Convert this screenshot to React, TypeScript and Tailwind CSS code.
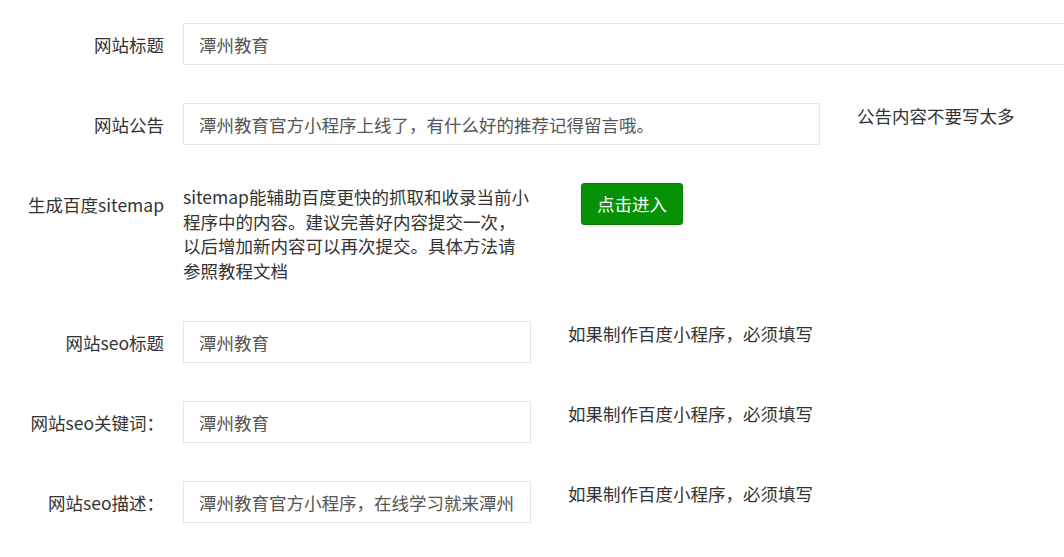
import React from "react";

const labelCls =
  "w-[183px] shrink-0 pr-[19px] text-right pt-[8.5px] leading-[25px] text-[#333] whitespace-nowrap";
const inputCls =
  "h-[42px] shrink-0 border border-[#e6e6e6] bg-white px-[15px] text-[17.5px] text-[#555] outline-none";
const tipCls = "ml-[37px] leading-[25px] text-[#333] whitespace-nowrap";

function Row({ children }: { children: React.ReactNode }) {
  return <div className="flex items-start mb-[38px]">{children}</div>;
}

export default function App() {
  return (
    <div
      className="w-[1064px] h-[557px] overflow-hidden bg-white text-[17.5px]"
      style={{ fontFamily: '"Noto Sans CJK SC", "Noto Sans", sans-serif' }}
    >
      <div className="pt-[23px]">
        <Row>
          <div className={labelCls}>网站标题</div>
          <input readOnly defaultValue="潭州教育" className={`${inputCls} w-[900px]`} />
        </Row>
        <Row>
          <div className={labelCls}>网站公告</div>
          <input
            readOnly
            defaultValue="潭州教育官方小程序上线了，有什么好的推荐记得留言哦。"
            className={`${inputCls} w-[637px]`}
          />
          <div className={tipCls}>公告内容不要写太多</div>
        </Row>
        <Row>
          <div className={labelCls}>生成百度sitemap</div>
          <div className="w-[348px] shrink-0 pt-[2px] leading-[24.5px] text-[#333]">
            <span className="block whitespace-nowrap">sitemap能辅助百度更快的抓取和收录当前小</span>
            <span className="block whitespace-nowrap">程序中的内容。建议完善好内容提交一次，</span>
            <span className="block whitespace-nowrap">以后增加新内容可以再次提交。具体方法请</span>
            <span className="block whitespace-nowrap">参照教程文档</span>
          </div>
          <button className="ml-[50px] flex h-[42px] w-[102px] items-center justify-center rounded-[3px] border border-[#067f06] bg-[#079107] text-[17.5px] text-white">
            点击进入
          </button>
        </Row>
        <Row>
          <div className={labelCls}>网站seo标题</div>
          <input readOnly defaultValue="潭州教育" className={`${inputCls} w-[348px]`} />
          <div className={tipCls}>如果制作百度小程序，必须填写</div>
        </Row>
        <Row>
          <div className={labelCls}>网站seo关键词：</div>
          <input readOnly defaultValue="潭州教育" className={`${inputCls} w-[348px]`} />
          <div className={tipCls}>如果制作百度小程序，必须填写</div>
        </Row>
        <Row>
          <div className={labelCls}>网站seo描述：</div>
          <input
            readOnly
            defaultValue="潭州教育官方小程序，在线学习就来潭州教育"
            className={`${inputCls} w-[348px]`}
          />
          <div className={tipCls}>如果制作百度小程序，必须填写</div>
        </Row>
      </div>
    </div>
  );
}
